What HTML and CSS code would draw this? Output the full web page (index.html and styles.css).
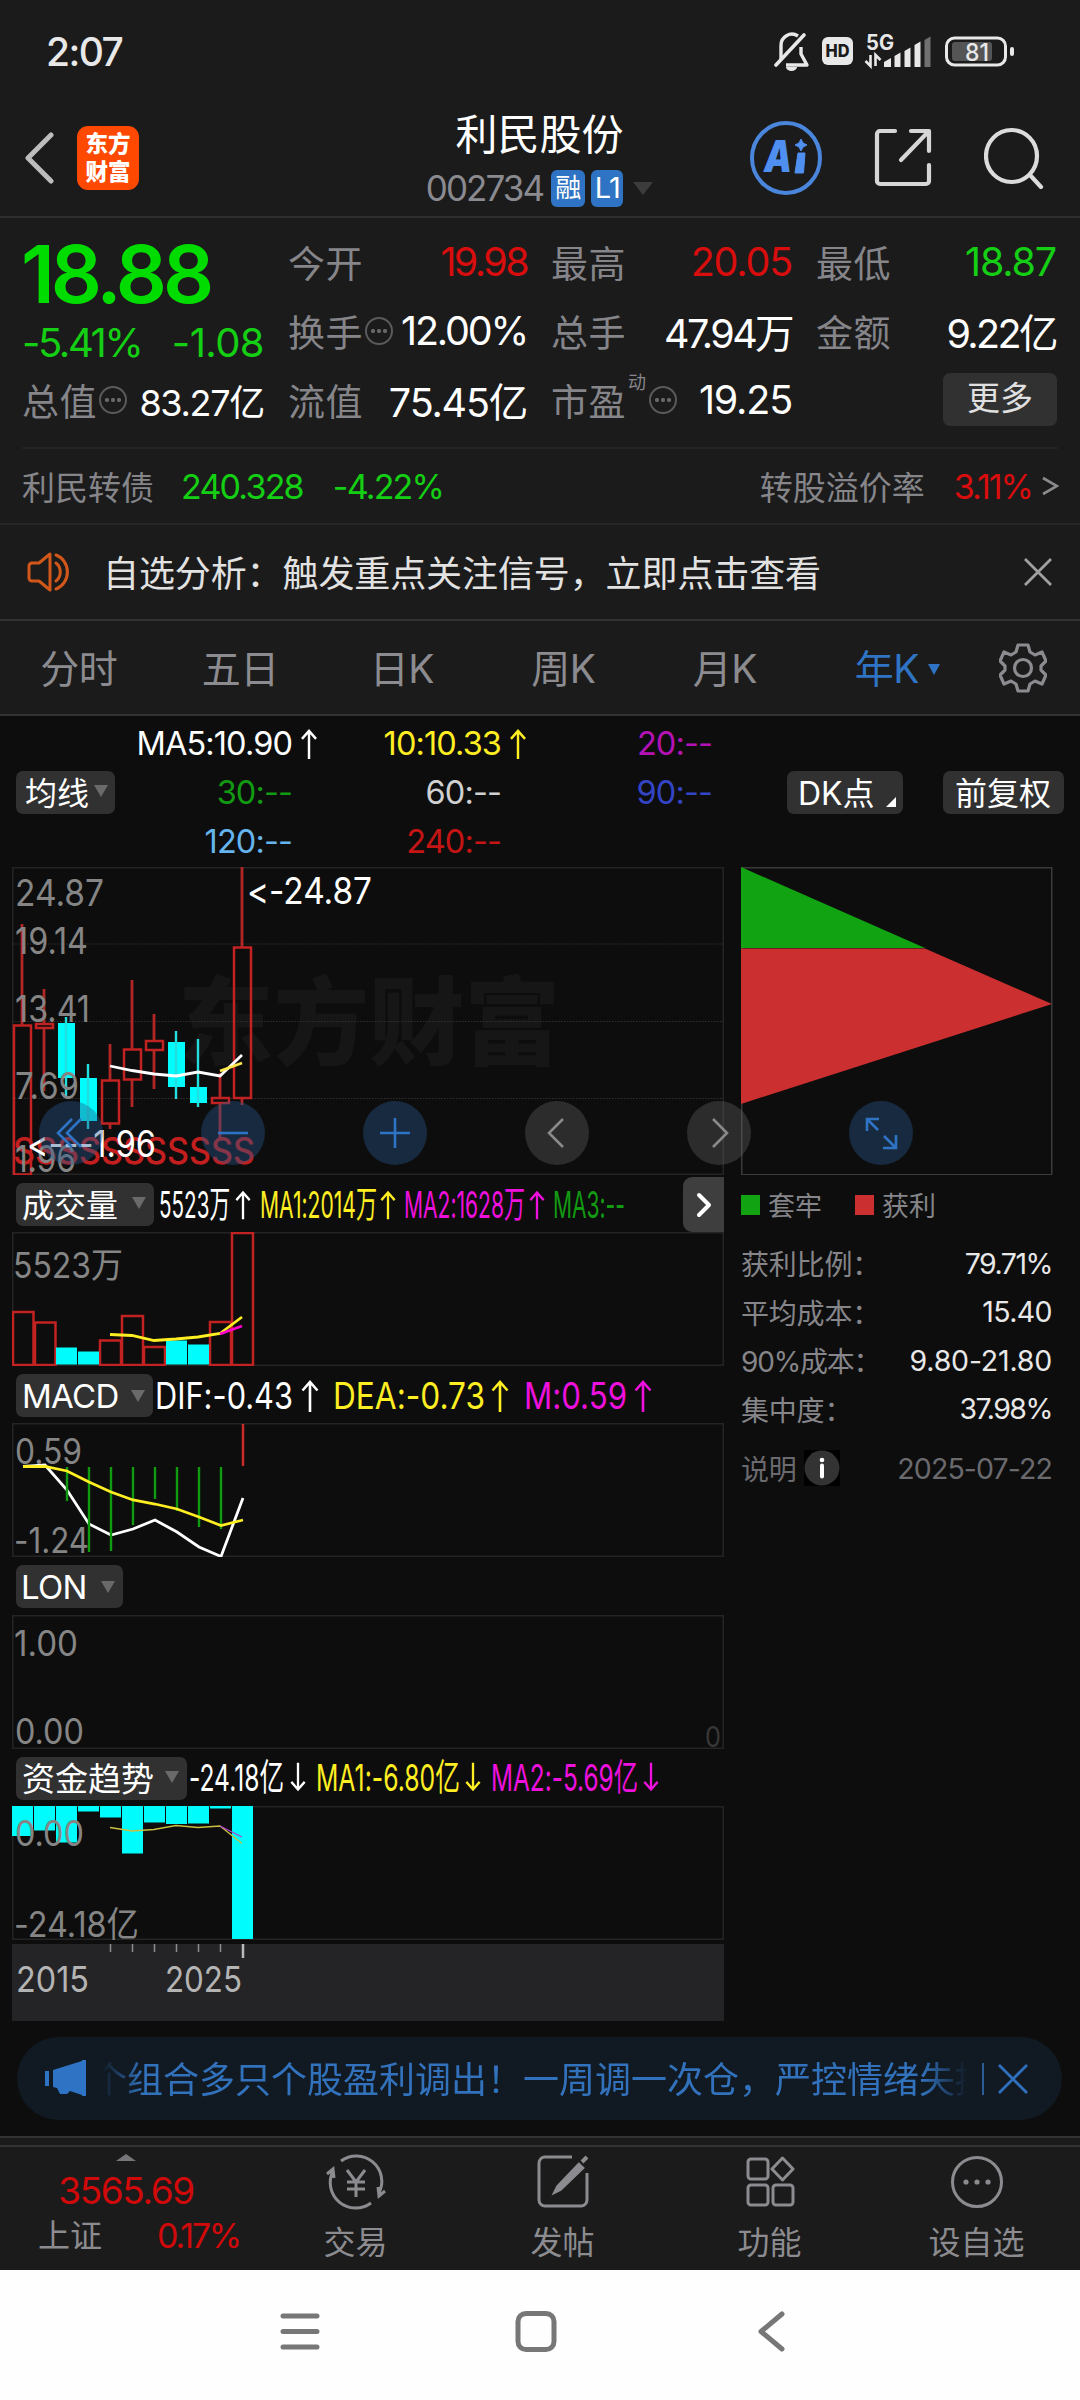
FILE: index.html
```html
<!DOCTYPE html>
<html lang="zh-CN">
<head>
    <meta charset="UTF-8">
    <meta name="viewport" content="width=device-width, initial-scale=1.0">
    <title>利民股份 002734</title>
    <link rel="stylesheet" href="styles.css">
</head>
<body>
    <div class="status-bar">
        <span class="time">2:07</span>
        <svg class="status-icons" width="242" height="42" viewBox="0 0 242 42">
            <!-- muted bell -->
            <path d="M7 30V16a11 11 0 0 1 17-10M27 17v7l6 11H12" fill="none" stroke="#e8e8e8" stroke-width="3.4" stroke-linejoin="round"/>
            <path d="M2 35L30 5" stroke="#e8e8e8" stroke-width="3.6" stroke-linecap="round"/>
            <path d="M12 37h11a5.5 4 0 0 1-11 0z" fill="#e8e8e8"/>
            <rect x="48" y="7" width="31" height="28" rx="6" fill="#e8e8e8"/>
            <text x="51.5" y="27" class="hd" textLength="24" lengthAdjust="spacingAndGlyphs">HD</text>
            <text x="92" y="19.500" class="net" textLength="28" lengthAdjust="spacingAndGlyphs">5G</text>
            <path d="M96.500 25v11l-5-5M101.500 36V25l5 5" fill="none" stroke="#e8e8e8" stroke-width="2.600"/>
            <path d="M110 37v-5l7-4v9zM120.500 37V26l6-3.500V37zM130.500 37V21l6-3.500V37zM140.500 37V15l6-3.500V37z" fill="#e8e8e8"/>
            <path d="M150.500 37V10l6-3.500V37z" fill="#707070"/>
            <rect x="172.500" y="8" width="59" height="27" rx="8" fill="none" stroke="#e8e8e8" stroke-width="3"/>
            <rect x="178" y="12" width="40" height="19" rx="3" fill="#555"/>
            <rect x="236" y="17" width="4" height="9" rx="2" fill="#e8e8e8"/>
            <text x="191" y="30.500" class="bat" textLength="24" lengthAdjust="spacingAndGlyphs">81</text>
        </svg>
    </div>

    <header class="header">
        <div class="header-left">
            <svg width="30" height="52" viewBox="0 0 30 52"><path d="M27 3L4 26l23 23" fill="none" stroke="#bdbdbd" stroke-width="5" stroke-linecap="round" stroke-linejoin="round"/></svg>
            <div class="logo"><span>东方</span><span>财富</span></div>
        </div>
        <div class="title">
            <h1>利民股份</h1>
            <div class="subtitle">
                <span class="code">002734</span>
                <span class="badge">融</span>
                <span class="badge badge-l1">L1</span>
                <svg width="20" height="13" viewBox="0 0 20 13"><path d="M0 0h20L10 13z" fill="#3c3c3c"/></svg>
            </div>
        </div>
        <div class="header-right">
            <svg width="72" height="74" viewBox="0 0 72 74">
                <ellipse cx="36" cy="37" rx="34" ry="35" fill="none" stroke="#4a86dc" stroke-width="4"/>
                <text x="14" y="51" class="ai" textLength="28" lengthAdjust="spacingAndGlyphs">A</text>
                <path d="M48 32h7l-1.500 20h-8.500z" fill="#4f8ff0" stroke="#4f8ff0" stroke-linejoin="round"/>
                <path d="M51 18l2 4 4 2-4 2-2 4-2-4-4-2 4-2z" fill="#4f8ff0" stroke="#4f8ff0" stroke-linejoin="round"/>
            </svg>
            <svg width="58" height="60" viewBox="0 0 58 60">
                <path d="M21 3H6a3 3 0 0 0-3 3v47a3 3 0 0 0 3 3h46a3 3 0 0 0 3-3V37" fill="none" stroke="#d6d6d6" stroke-width="4.200" stroke-linecap="round"/>
                <path d="M37 3h18v20M54 4L27 32" fill="none" stroke="#d6d6d6" stroke-width="4.200" stroke-linecap="round" stroke-linejoin="round"/>
            </svg>
            <svg width="60" height="62" viewBox="0 0 60 62">
                <ellipse cx="27.500" cy="29" rx="25.500" ry="26" fill="none" stroke="#dcdcdc" stroke-width="4.200"/>
                <path d="M46 48l11 12" stroke="#dcdcdc" stroke-width="4.200" stroke-linecap="round"/>
            </svg>
        </div>
    </header>

    <section class="quote">
        <div class="quote-main">
            <div class="price-box">
                <div class="price">18.88</div>
                <div class="change"><span class="s-pct">-5.41%</span><span>-1.08</span></div>
            </div>
            <div class="cell c1"><label>总值<i class="more-dot"></i></label><b class="small">83.27亿</b></div>
            <div class="cell c2"><label>今开</label><b class="red tight">19.98</b></div>
            <div class="cell c2"><label>换手<i class="more-dot"></i></label><b class="s-pct">12.00%</b></div>
            <div class="cell c2"><label>流值</label><b>75.45亿</b></div>
            <div class="cell c3"><label>最高</label><b class="red">20.05</b></div>
            <div class="cell c3"><label>总手</label><b class="tight">47.94万</b></div>
            <div class="cell c3"><label>市盈<sup>动</sup><i class="more-dot"></i></label><b>19.25</b></div>
            <div class="cell c4"><label>最低</label><b class="green">18.87</b></div>
            <div class="cell c4"><label>金额</label><b class="tight">9.22亿</b></div>
            <div class="cell c4 end"><span class="btn-more">更多</span></div>
        </div>
        <div class="bond">
            <span class="bond-name">利民转债</span>
            <span class="green bond-price">240.328</span>
            <span class="green">-4.22%</span>
            <span class="premium">转股溢价率</span>
            <span class="red tight">3.11%</span>
            <svg width="17" height="20" viewBox="0 0 17 20"><path d="M1 2l14 8-14 8" fill="none" stroke="#8a8a8e" stroke-width="2.600"/></svg>
        </div>
    </section>

    <div class="notice">
        <svg width="48" height="42" viewBox="0 0 48 42" fill="none" stroke="#d2571a" stroke-width="3">
            <path d="M22 3L11 12H4a3 3 0 0 0-3 3v12a3 3 0 0 0 3 3h7l11 9z" stroke-linejoin="round" transform="translate(1)"/>
            <path d="M29 12a10 11 0 0 1 0 18M29 4a17 18 0 0 1 0 34" stroke-linecap="round"/>
        </svg>
        <span>自选分析：触发重点关注信号，立即点击查看</span>
        <svg width="28" height="28" viewBox="0 0 28 28"><path d="M1 1l26 26M27 1L1 27" stroke="#a0a0a0" stroke-width="2.800"/></svg>
    </div>

    <nav class="tabs">
        <span>分时</span>
        <span>五日</span>
        <span>日K</span>
        <span>周K</span>
        <span>月K</span>
        <span class="active">年K<i></i></span>
        <svg width="48" height="50" viewBox="0 0 48 50" fill="none" stroke="#8c8c90" stroke-width="3.200" stroke-linejoin="round">
            <path d="M19 2h10l2 7 5 3 7-3 4 9-5 5v4l5 5-4 9-7-3-5 3-2 7H19l-2-7-5-3-7 3-4-9 5-5v-4l-5-5 4-9 7 3 5-3z"/>
            <circle cx="24" cy="25" r="8.500"/>
        </svg>
    </nav>

    <main class="chart-area">
        <svg class="defs" width="0" height="0">
            <symbol id="up" viewBox="0 0 18 32"><path d="M9 32V2M1.500 10.500L9 2l7.500 8.500" fill="none" stroke="currentColor" stroke-width="2.600"/></symbol>
            <symbol id="down" viewBox="0 0 18 32"><path d="M9 0v30M1.500 21.500L9 30l7.500-8.500" fill="none" stroke="currentColor" stroke-width="2.600"/></symbol>
        </svg>

        <div class="ma-bar">
            <span class="pill pill-ma">均线<i class="caret"></i></span>
            <div class="ma-grid">
                <span class="white">MA5:10.90<svg><use href="#up"/></svg></span>
                <span class="yellow">10:10.33<svg><use href="#up"/></svg></span>
                <span class="purple">20:--<svg></svg></span>
                <span class="dgreen">30:--<svg></svg></span>
                <span class="gray">60:--<svg></svg></span>
                <span class="blue">90:--<svg></svg></span>
                <span class="sky">120:--<svg></svg></span>
                <span class="dred">240:--<svg></svg></span>
            </div>
            <span class="pill pill-dk">DK点<i class="corner"></i></span>
            <span class="pill pill-fq">前复权</span>
        </div>

        <div class="charts">
            <div class="left">
                <!-- K line -->
                <svg class="kline" width="712" height="308" viewBox="0 0 712 308">
                    <text x="166" y="190" class="watermark" textLength="382" lengthAdjust="spacingAndGlyphs">东方财富</text>
                    <rect x=".75" y=".75" width="710.500" height="306.500" class="frame"/>
                    <path d="M0 77h712M0 154.500h712M0 231.500h712" class="dots"/>
                    <g class="up">
                        <rect x="2" y="158.500" width="17" height="149"/><path d="M10 57v101"/>
                        <rect x="24" y="157" width="17" height="4"/><path d="M32 122v35M32 161v63"/>
                        <rect x="90" y="213.500" width="17" height="43"/><path d="M98 177v36M98 257v5"/>
                        <rect x="112" y="182.500" width="17" height="30"/><path d="M120 113v69M120 213v27"/>
                        <rect x="134" y="174" width="17" height="9"/><path d="M142 147v27M142 183v39"/>
                        <rect x="200" y="231" width="17" height="5"/><path d="M208 206v25M208 236v37"/>
                        <rect x="222" y="80.500" width="17" height="150.500"/><path d="M230 0v80M230 232v6"/>
                    </g>
                    <g class="fall">
                        <rect x="46" y="156" width="17" height="55"/><path d="M54 150v81"/>
                        <rect x="68" y="211" width="17" height="43"/><path d="M76 197v65"/>
                        <rect x="156" y="175" width="17" height="45"/><path d="M164 164v68"/>
                        <rect x="178" y="220" width="17" height="16"/><path d="M186 172v68"/>
                    </g>
                    <polyline points="98,199 120,203.500 142,207 164,209 186,205 208,209 230,188" class="line" stroke="#fff"/>
                    <polyline points="208,204 230,196" class="line" stroke="#ffe94d"/>
                    <text x="1" y="297" class="sell" textLength="242" lengthAdjust="spacingAndGlyphs">SSSSSSSSSSS</text>
                    <g class="axis">
                        <text x="3" y="39" textLength="89" lengthAdjust="spacingAndGlyphs">24.87</text>
                        <text x="3" y="87" textLength="73" lengthAdjust="spacingAndGlyphs">19.14</text>
                        <text x="3" y="155" textLength="75" lengthAdjust="spacingAndGlyphs">13.41</text>
                        <text x="3" y="231.500" textLength="64" lengthAdjust="spacingAndGlyphs">7.69</text>
                        <text x="3" y="304.500" textLength="61" lengthAdjust="spacingAndGlyphs">1.96</text>
                    </g>
                    <g class="mark">
                        <text x="235" y="37" textLength="125" lengthAdjust="spacingAndGlyphs">&lt;-24.87</text>
                        <text x="15" y="289.500" textLength="129" lengthAdjust="spacingAndGlyphs">&lt;---1.96</text>
                    </g>
                </svg>

                <!-- volume -->
                <div class="ind-head">
                    <span class="pill pill-vol">成交量<i class="caret"></i></span>
                    <svg width="712" height="57" viewBox="0 0 712 57" class="ind-values">
                        <g class="white"><text x="147" y="43" textLength="71" lengthAdjust="spacingAndGlyphs">5523万</text><use href="#up" x="223" y="12" width="16" height="36"/></g>
                        <g class="yellow"><text x="248" y="43" textLength="117" lengthAdjust="spacingAndGlyphs">MA1:2014万</text><use href="#up" x="368" y="12" width="16" height="36"/></g>
                        <g class="magenta"><text x="392" y="43" textLength="121" lengthAdjust="spacingAndGlyphs">MA2:1628万</text><use href="#up" x="517" y="12" width="16" height="36"/></g>
                        <g class="dgreen"><text x="541" y="43" textLength="72" lengthAdjust="spacingAndGlyphs">MA3:--</text></g>
                    </svg>
                    <span class="next"><svg width="16" height="26" viewBox="0 0 16 26"><path d="M3 3l10 10L3 23" fill="none" stroke="#fff" stroke-width="4" stroke-linecap="round" stroke-linejoin="round"/></svg></span>
                </div>
                <svg width="712" height="134" viewBox="0 0 712 134">
                    <rect x=".75" y=".75" width="710.500" height="132.500" class="frame"/>
                    <g class="up">
                        <rect x="1" y="80" width="20.500" height="53"/>
                        <rect x="23" y="90.500" width="20.500" height="42.500"/>
                        <rect x="88" y="108.500" width="21" height="24.500"/>
                        <rect x="110" y="84" width="21" height="49"/>
                        <rect x="132" y="115" width="21" height="18"/>
                        <rect x="198" y="90" width="21" height="43"/>
                        <rect x="220" y="1" width="21" height="132"/>
                    </g>
                    <g class="fall">
                        <rect x="44" y="115.500" width="21" height="17"/>
                        <rect x="66" y="119.500" width="21" height="13"/>
                        <rect x="154" y="108.500" width="21" height="24"/>
                        <rect x="176" y="112.500" width="21" height="20"/>
                    </g>
                    <polyline points="98,102.500 120,103.500 142,108.500 164,107 186,105 208,101.500 230,85" class="line" stroke="#ffee22"/>
                    <polyline points="208,102 230,94" class="line" stroke="#f0c"/>
                    <text x="1" y="46" class="axis" textLength="110" lengthAdjust="spacingAndGlyphs">5523万</text>
                </svg>

                <!-- MACD -->
                <div class="ind-head">
                    <span class="pill pill-macd">MACD<i class="caret"></i></span>
                    <svg width="712" height="57" viewBox="0 0 712 57" class="ind-values">
                        <g class="white"><text x="143" y="43" textLength="138" lengthAdjust="spacingAndGlyphs">DIF:-0.43</text><use href="#up" x="289" y="14" width="18" height="32"/></g>
                        <g class="yellow"><text x="321" y="43" textLength="152" lengthAdjust="spacingAndGlyphs">DEA:-0.73</text><use href="#up" x="479" y="14" width="18" height="32"/></g>
                        <g class="magenta"><text x="512" y="43" textLength="103" lengthAdjust="spacingAndGlyphs">M:0.59</text><use href="#up" x="622" y="14" width="18" height="32"/></g>
                    </svg>
                </div>
                <svg width="712" height="134" viewBox="0 0 712 134">
                    <rect x=".75" y=".75" width="710.500" height="132.500" class="frame"/>
                    <polyline points="11,43.500 33,42 55,67 77,101 99,112 121,106 143,97 165,109 187,124 209,133.500 231,75" class="line" stroke="#fff"/>
                    <path d="M55 44v34M77 44v85M99 44v84M121 44v58M143 44v32M165 44v44M187 44v60M209 44v62" stroke="#109a10" stroke-width="2.400"/>
                    <path d="M231 1v42" stroke="#c92a2a" stroke-width="2.500"/>
                    <polyline points="11,43.500 33,43.500 55,48 77,59 99,69 121,77 143,81 165,86 187,94 209,102.500 231,97" class="line" stroke="#ffee22"/>
                    <g class="axis">
                        <text x="3" y="41" textLength="67" lengthAdjust="spacingAndGlyphs">0.59</text>
                        <text x="2" y="130" textLength="75" lengthAdjust="spacingAndGlyphs">-1.24</text>
                    </g>
                </svg>

                <!-- LON -->
                <div class="ind-head lon-head">
                    <span class="pill pill-lon">LON<i class="caret"></i></span>
                </div>
                <svg width="712" height="134" viewBox="0 0 712 134">
                    <rect x=".75" y=".75" width="710.500" height="132.500" class="frame"/>
                    <g class="axis">
                        <text x="2" y="40.500" textLength="64" lengthAdjust="spacingAndGlyphs">1.00</text>
                        <text x="3" y="129" textLength="69" lengthAdjust="spacingAndGlyphs">0.00</text>
                    </g>
                    <text x="693" y="132" class="zero" textLength="16" lengthAdjust="spacingAndGlyphs">0</text>
                </svg>

                <!-- capital flow -->
                <div class="ind-head">
                    <span class="pill pill-fund">资金趋势<i class="caret"></i></span>
                    <svg width="712" height="57" viewBox="0 0 712 57" class="ind-values">
                        <g class="white"><text x="177" y="42" textLength="95" lengthAdjust="spacingAndGlyphs">-24.18亿</text><use href="#down" x="278" y="10" width="16" height="36"/></g>
                        <g class="yellow"><text x="304" y="42" textLength="144" lengthAdjust="spacingAndGlyphs">MA1:-6.80亿</text><use href="#down" x="453" y="10" width="16" height="36"/></g>
                        <g class="magenta"><text x="479" y="42" textLength="147" lengthAdjust="spacingAndGlyphs">MA2:-5.69亿</text><use href="#down" x="631" y="10" width="16" height="36"/></g>
                    </svg>
                </div>
                <svg width="712" height="134" viewBox="0 0 712 134">
                    <rect x=".75" y=".75" width="710.500" height="132.500" class="frame"/>
                    <g class="fall">
                        <rect x="0" width="21" height="30"/>
                        <rect x="22" width="21" height="24.500"/>
                        <rect x="44" width="21" height="36.500"/>
                        <rect x="66" width="21" height="5.500"/>
                        <rect x="88" width="21" height="11.500"/>
                        <rect x="110" width="21" height="47.500"/>
                        <rect x="132" width="21" height="16.500"/>
                        <rect x="154" width="21" height="18"/>
                        <rect x="176" width="21" height="17.500"/>
                        <rect x="198" width="21" height="2.500"/>
                        <rect x="220" width="21" height="133"/>
                    </g>
                    <polyline points="98,21.500 120,25 142,23.500 164,19.500 186,21.500 208,20 230,37.500" class="thin" stroke="#c8c040"/>
                    <polyline points="208,20 230,31" class="thin" stroke="#b040d0"/>
                    <g class="axis">
                        <text x="3" y="39.500" textLength="69" lengthAdjust="spacingAndGlyphs">0.00</text>
                        <text x="2" y="130.500" textLength="125" lengthAdjust="spacingAndGlyphs">-24.18亿</text>
                    </g>
                </svg>

                <svg class="time-axis" width="712" height="77" viewBox="0 0 712 77">
                    <path d="M98.500 0v8M120.500 0v8M142.500 0v8M164.500 0v8M186.500 0v8M208.500 0v8" stroke="#8c8c8c" stroke-width="1.500"/>
                    <path d="M231 0v14" stroke="#bbb" stroke-width="2.500"/>
                    <text x="4" y="48" textLength="73" lengthAdjust="spacingAndGlyphs">2015</text>
                    <text x="153" y="48" textLength="77" lengthAdjust="spacingAndGlyphs">2025</text>
                </svg>
            </div>

            <!-- chip distribution -->
            <aside class="chips">
                <svg width="312" height="308" viewBox="0 0 312 308">
                    <rect x=".75" y=".75" width="310" height="307" fill="none" stroke="#3a3a3a" stroke-width="1.500"/>
                    <path d="M0 0L184 81H0z" fill="#12a312"/>
                    <path d="M0 81.500h184L311 137 0 237z" fill="#cb2f2f"/>
                </svg>
                <div class="legend">
                    <i class="sq-green"></i><span>套牢</span>
                    <i class="sq-red"></i><span>获利</span>
                </div>
                <dl>
                    <div><dt>获利比例：</dt><dd class="tight">79.71%</dd></div>
                    <div><dt>平均成本：</dt><dd>15.40</dd></div>
                    <div><dt class="pct">90%成本：</dt><dd class="range">9.80-21.80</dd></div>
                    <div><dt>集中度：</dt><dd class="tight">37.98%</dd></div>
                    <div class="explain"><dt>说明<svg width="36" height="36" viewBox="0 0 36 36"><rect width="36" height="36" fill="#000"/><circle cx="18" cy="18" r="17.500" fill="#333"/><circle cx="18" cy="10" r="2.300" fill="#fff"/><path d="M18 15.500v11" stroke="#fff" stroke-width="4" stroke-linecap="round"/></svg></dt><dd>2025-07-22</dd></div>
                </dl>
            </aside>

            <div class="controls">
                <span class="ctl"><svg viewBox="0 0 64 64"><path d="M33 18L19 32l14 14M42 18L28 32l14 14"/></svg></span>
                <span class="ctl"><svg viewBox="0 0 64 64"><path d="M17 32h30"/></svg></span>
                <span class="ctl"><svg viewBox="0 0 64 64"><path d="M17 32h30M32 17v30"/></svg></span>
                <span class="ctl plain"><svg viewBox="0 0 64 64"><path d="M38 18L24 32l14 14"/></svg></span>
                <span class="ctl plain"><svg viewBox="0 0 64 64"><path d="M26 18l14 14-14 14"/></svg></span>
                <span class="ctl"><svg viewBox="0 0 64 64"><path d="M18 30V18h12M18 18l11 11M47 34v13H34M47 47L35 35"/></svg></span>
            </div>
        </div>

        <div class="promo">
            <svg width="43" height="37" viewBox="0 0 43 37" fill="#2f74c4"><path d="M1 11h4v15H1zM9 10L38 1v34L26 31l-3 3h-7l-3-6-4-1z"/><path d="M38 0h4v36h-4z"/></svg>
            <div class="promo-text">个组合多只个股盈利调出！一周调一次仓，严控情绪失控</div>
            <i class="promo-sep"></i>
            <svg width="30" height="30" viewBox="0 0 30 30"><path d="M1 1l28 28M29 1L1 29" stroke="#2f6fbb" stroke-width="2.800"/></svg>
        </div>
    </main>

    <footer class="toolbar">
        <div class="index">
            <svg width="20" height="7" viewBox="0 0 20 7"><path d="M0 7L10 0l10 7z" fill="#77777b"/></svg>
            <b>3565.69</b>
            <div><span>上证</span><em>0.17%</em></div>
        </div>
        <div class="tool">
            <svg width="60" height="56" viewBox="0 0 60 56" fill="none" stroke="#8c8c90" stroke-width="3">
                <path d="M15 7a25.500 25.500 0 0 1 38 32M45 49A25.500 25.500 0 0 1 7 17M1 20l6-5 1 9M59 37l-6 5-1-9"/>
                <path d="M21 16l9 12 9-12M30 28v15M21 28h18M21 35h18"/>
            </svg>
            <span>交易</span>
        </div>
        <div class="tool">
            <svg width="52" height="56" viewBox="0 0 52 56" fill="none" stroke="#8c8c90" stroke-width="3">
                <path d="M35 3H8a6 6 0 0 0-6 6v37a6 6 0 0 0 6 6h36a6 6 0 0 0 6-6V19"/>
                <path d="M42 11L21 33l-2 4 4-2 22-21zM45 8l5-5" stroke-width="4"/>
            </svg>
            <span>发帖</span>
        </div>
        <div class="tool">
            <svg width="50" height="56" viewBox="0 0 50 56" fill="none" stroke="#8c8c90" stroke-width="3">
                <rect x="3" y="5" width="20" height="20" rx="3"/>
                <rect x="3" y="31" width="20" height="20" rx="3"/>
                <rect x="28" y="31" width="20" height="20" rx="3"/>
                <path d="M37.500 4L48 15 37.500 26 27 15z" stroke-linejoin="round"/>
            </svg>
            <span>功能</span>
        </div>
        <div class="tool">
            <svg width="54" height="56" viewBox="0 0 54 56">
                <circle cx="27" cy="28" r="24.500" fill="none" stroke="#8c8c90" stroke-width="3"/>
                <g fill="#8c8c90"><circle cx="16" cy="28" r="2.600"/><circle cx="27" cy="28" r="2.600"/><circle cx="38" cy="28" r="2.600"/></g>
            </svg>
            <span>设自选</span>
        </div>
    </footer>

    <div class="sys-nav">
        <svg width="40" height="44" viewBox="0 0 40 44"><path d="M3 6h34M3 21.500h34M3 37h34" stroke="#777" stroke-width="5" stroke-linecap="round"/></svg>
        <svg width="42" height="44" viewBox="0 0 42 44"><rect x="3" y="3.500" width="36" height="36" rx="8" fill="none" stroke="#777" stroke-width="5"/></svg>
        <svg width="40" height="44" viewBox="0 0 40 44"><path d="M31 4L10 21.500 31 39" fill="none" stroke="#777" stroke-width="5" stroke-linecap="round" stroke-linejoin="round"/></svg>
    </div>
</body>
</html>
```
FILE: styles.css
```css
* { box-sizing: border-box; }
body {
    margin: 0;
    width: 1080px;
    background: #1b1b1b;
    color: #fff;
    font-family: Inter, "Noto Sans CJK SC", sans-serif;
    font-weight: 400;
    font-feature-settings: "calt" 0;
    white-space: nowrap;
}
svg { display: block; flex: none; }
i, em { font-style: normal; }
b { font-weight: 400; }

.red { color: #d80d0d; }
.green { color: #14cf14; }
.white { color: #fff; fill: #fff; }
.yellow { color: #ffee22; fill: #ffee22; }
.magenta { color: #ee11dd; fill: #ee11dd; }
.purple { color: #b412b4; }
.dgreen { color: #129a12; fill: #129a12; }
.gray { color: #d0d0d0; }
.blue { color: #3344c4; }
.sky { color: #66b4ee; }
.dred { color: #c41414; }

/* status bar */
.status-bar {
    height: 102px;
    padding: 0 64px 0 46px;
    display: flex;
    align-items: center;
    justify-content: space-between;
}
.time {
    font-size: 39px;
    font-weight: 500;
    color: #e8e8e8;
    letter-spacing: -1.6px;
}
.hd { font-size: 17px; font-weight: 800; fill: #1b1b1b; }
.net { font-size: 21px; font-weight: 700; fill: #e8e8e8; }
.bat { font-size: 24px; font-weight: 500; fill: #e8e8e8; }

/* header */
.header {
    height: 116px;
    padding: 0 36px 10px 24px;
    border-bottom: 2px solid #2e2e2e;
    display: grid;
    grid-template-columns: 346px 1fr 294px;
    align-items: center;
}
.header-left { display: flex; align-items: center; gap: 23px; }
.logo {
    width: 62px;
    height: 64px;
    border-radius: 11px;
    background: #ff4800;
    display: flex;
    flex-direction: column;
    align-items: center;
    justify-content: center;
    font-size: 22.5px;
    font-weight: 900;
    line-height: 28px;
}
.title {
    display: flex;
    flex-direction: column;
    align-items: center;
    padding-right: 41px;
}
.title h1 {
    margin: 6px 0 0;
    font-size: 42px;
    font-weight: 400;
    line-height: 54px;
}
.subtitle { display: flex; align-items: center; height: 52px; }
.code { font-size: 35px; color: #8a8a90; letter-spacing: -1.9px; margin-right: 8px; }
.badge {
    width: 34px;
    height: 37px;
    border-radius: 6px;
    background: #2f74c4;
    font-size: 26px;
    line-height: 36px;
    text-align: center;
    margin-right: 6px;
}
.badge-l1 { width: 32px; font-size: 29px; letter-spacing: -1px; margin-right: 10px; }
.header-right { display: flex; align-items: center; justify-content: space-between; }
.ai { font-size: 44px; font-weight: 900; font-style: italic; fill: #4f8ff0; }

/* quote */
.quote { height: 307px; border-bottom: 2px solid #262626; }
.quote-main {
    height: 231px;
    margin: 0 22px;
    padding: 9px 1px 0 0;
    border-bottom: 2px solid #232323;
    display: grid;
    grid-auto-flow: column;
    grid-template-rows: 69px 69px 69px;
    grid-template-columns: 242px 239px 241px 240px;
    column-gap: 24px;
}
.price-box { grid-row: span 2; }
.price {
    height: 94px;
    margin-left: -1px;
    font-size: 80px;
    font-weight: 600;
    line-height: 94px;
    color: #00dc00;
    letter-spacing: -4px;
}
.change {
    display: flex;
    justify-content: space-between;
    color: #14cf14;
    font-size: 40px;
    line-height: 44px;
    letter-spacing: -0.6px;
}
.cell { display: flex; align-items: center; justify-content: space-between; }
.cell label { display: flex; align-items: center; font-size: 37px; color: #85858a; letter-spacing: 0.5px; }
.cell label sup { align-self: flex-start; font-size: 18px; line-height: 18px; margin: 1px 0 0 2px; }
.cell b { font-size: 39.5px; letter-spacing: -1.2px; }
.cell b.small { font-size: 36px; letter-spacing: -1.3px; }
.cell b.tight { letter-spacing: -2.6px; }
.cell b.s-pct { letter-spacing: -2.2px; }
.change .s-pct { letter-spacing: -2.4px; }
.cell.end { justify-content: flex-end; }
.more-dot {
    width: 28px;
    height: 28px;
    margin-left: 2px;
    border: 2px solid #5a5a5a;
    border-radius: 50%;
    background:
        radial-gradient(circle at 6px 12px, #666 1.8px, transparent 2.4px),
        radial-gradient(circle at 12px 12px, #666 1.8px, transparent 2.4px),
        radial-gradient(circle at 18px 12px, #666 1.8px, transparent 2.4px);
}
.btn-more {
    width: 114px;
    height: 53px;
    margin-right: -1px;
    border-radius: 7px;
    background: #313131;
    color: #e0e0e0;
    font-size: 33px;
    line-height: 51px;
    text-align: center;
}
.bond {
    height: 74px;
    padding: 0 21px 0 22px;
    display: flex;
    align-items: center;
    font-size: 34px;
    letter-spacing: -1.8px;
}
.bond-name, .premium { font-size: 33px; color: #85858a; letter-spacing: 0; }
.bond-price { margin: 0 30px 0 27px; }
.premium { margin-left: auto; margin-right: 29px; }
.bond .tight { letter-spacing: -2px; margin-right: 10px; }

/* notice */
.notice {
    height: 96px;
    padding: 0 28px 0 27px;
    border-bottom: 2px solid #333;
    display: flex;
    align-items: center;
    color: #e2e2e2;
    font-size: 36px;
    letter-spacing: -0.1px;
}
.notice span { margin: 0 auto 0 28px; padding-bottom: 3px; }

/* period tabs */
.tabs {
    height: 95px;
    border-bottom: 2px solid #333;
    display: flex;
    align-items: center;
    font-size: 39px;
    color: #8c8c90;
}
.tabs span { width: 161.5px; padding: 0 4px 3px 0; text-align: center; letter-spacing: -0.5px; }
.tabs svg { margin-left: 30px; }
.tabs .active { color: #2f74c4; }
.tabs .active i {
    display: inline-block;
    margin: 0 -22px 8px 9px;
    border: 6.5px solid transparent;
    border-top: 11px solid #2f74c4;
    border-bottom: 0;
}

/* chart area */
.chart-area { height: 1420px; background: #0d0d0d; }
.defs { position: absolute; }
.pill {
    height: 43px;
    padding: 0 0 3px 6px;
    border-radius: 7px;
    background: #313131;
    display: flex;
    align-items: center;
    flex: none;
    font-size: 32px;
}
.caret {
    border: 7px solid transparent;
    border-top: 12px solid #6a6a6a;
    border-bottom: 0;
    margin: 0 8px 0 auto;
}
.ma-bar {
    height: 151px;
    padding: 2px 16px 0;
    display: flex;
    align-items: center;
}
.pill-ma { width: 99px; padding-left: 9px; }
.pill-ma .caret { margin-right: 7px; }
.ma-grid {
    width: 672px;
    height: 147px;
    padding-right: 48px;
    display: grid;
    grid-template-columns: 203px 209px 211px;
    grid-auto-rows: 49px;
    align-items: center;
    font-size: 32.5px;
    letter-spacing: -0.9px;
}
.ma-grid span { display: flex; align-items: center; justify-content: flex-end; }
.ma-grid svg { width: 18px; height: 30px; margin-left: 8px; }
.pill-dk { width: 116px; padding-left: 11px; justify-content: space-between; letter-spacing: 0; }
.corner {
    align-self: flex-end;
    margin: 0 7px 4px 0;
    border-left: 10px solid transparent;
    border-bottom: 10px solid #fff;
}
.pill-fq { width: 121px; margin-left: auto; padding-left: 12px; }

.charts { position: relative; display: flex; gap: 17px; padding-left: 12px; }
.left { width: 712px; }
.frame { fill: none; stroke: #242424; stroke-width: 1.5; }
.dots { stroke: #303030; stroke-width: 1.2; stroke-dasharray: 1.5 1.5; }
.watermark { font-size: 96px; font-weight: 900; fill: #161616; }
.up rect { fill: none; stroke: #c32222; stroke-width: 2.5; }
.up path { stroke: #b22626; stroke-width: 2.8; }
.fall rect { fill: #00fcfc; }
.fall path { stroke: #22dede; stroke-width: 2.4; }
.line { fill: none; stroke-width: 2.8; }
.thin { fill: none; stroke-width: 1.3; }
.axis { font-size: 35px; fill: #858585; }
.kline .axis, .mark, .sell { font-size: 37px; }
.mark { fill: #fff; }
.sell { fill: #c41f1f; font-weight: 500; }
.zero { font-size: 28px; fill: #383838; }
.ind-head { position: relative; height: 57px; padding: 8px 0 0 4px; display: flex; }
.lon-head { height: 58px; }
.ind-values { position: absolute; left: 0; top: 0; font-size: 37px; }
.pill-vol { width: 138px; }
.pill-macd { width: 137px; }
.pill-lon { width: 107px; padding-left: 5px; }
.pill-macd, .pill-lon { letter-spacing: -0.7px; font-size: 33px; padding-bottom: 0; }
.pill-fund { width: 171px; }
.pill-fund { font-size: 33px; }
.next {
    position: absolute;
    right: 0;
    top: 2px;
    width: 41px;
    height: 55px;
    border-radius: 9px 0 0 9px;
    background: #3e3e3e;
    display: flex;
    align-items: center;
    justify-content: center;
}
.time-axis { margin-top: 4px; background: #242426; font-size: 36px; }
.time-axis text { fill: #b4b4b4; }

.chips { width: 311px; }
.legend {
    height: 60px;
    display: flex;
    align-items: center;
    font-size: 27px;
    color: #85858a;
}
.legend i { width: 19px; height: 20px; margin-right: 8px; }
.legend span { margin-right: 33px; padding-bottom: 2px; }
.sq-green { background: #12a312; }
.sq-red { background: #cb2f2f; }
.chips dl { margin: 4px 0 0; }
.chips dl div { height: 48.5px; display: flex; align-items: center; justify-content: space-between; }
.chips dt { display: flex; align-items: center; font-size: 28px; color: #85858a; letter-spacing: -0.2px; }
.chips dt.pct { letter-spacing: -1.2px; }
.chips dd { margin: 0; font-size: 28.5px; letter-spacing: -0.6px; color: #e8e8e8; }
.chips dd.tight { letter-spacing: -1.5px; }
.chips dd.range { letter-spacing: -0.2px; }
.chips .explain { margin-top: 11px; }
.explain dt { color: #6a6a6e; }
.explain dt svg { margin-left: 7px; }
.chips .explain dd { color: #6a6a6e; letter-spacing: -0.9px; }

.controls { position: absolute; left: 39px; top: 234px; display: flex; gap: 98px; }
.ctl { width: 64px; height: 64px; border-radius: 50%; background: rgba(39, 87, 140, 0.4); }
.ctl path { fill: none; stroke: #2f74c4; stroke-width: 2.6; }
.ctl.plain { background: rgba(110, 110, 110, 0.33); }
.ctl.plain path { stroke: #8a8a8a; }

.promo {
    height: 83px;
    margin: 16px 18px 0 17px;
    padding: 0 34px 0 27px;
    border-radius: 42px;
    background: #111a23;
    display: flex;
    align-items: center;
}
.promo-text {
    width: 866px;
    margin-left: 15px;
    padding-bottom: 3px;
    overflow: hidden;
    text-indent: -11px;
    font-size: 36px;
    letter-spacing: 0;
    color: #3272bd;
    -webkit-mask-image: linear-gradient(90deg, transparent, #000 40px, #000 820px, transparent);
    mask-image: linear-gradient(90deg, transparent, #000 40px, #000 820px, transparent);
}
.promo-sep { width: 2px; height: 32px; margin: 0 14px; background: #2a5c98; }

/* bottom toolbar */
.toolbar {
    height: 134px;
    border-top: 2px solid #333;
    padding-top: 7px;
    display: grid;
    grid-template-columns: 252px repeat(4, 207px);
    color: #8c8c90;
    background: linear-gradient(#333, #333) 0 7px / 100% 2px no-repeat;
}
.index { display: flex; flex-direction: column; align-items: center; padding-top: 9px; }
.index b { margin-top: 6px; font-size: 37px; line-height: 48px; color: #d00a0a; letter-spacing: -1.4px; }
.index div { width: 202px; margin: -4px 0 0 26px; display: flex; justify-content: space-between; align-items: center; line-height: 50px; }
.index div span { font-size: 32px; }
.index em { font-size: 34px; color: #d00a0a; letter-spacing: -2.2px; }
.tool { display: flex; flex-direction: column; align-items: center; padding-top: 9px; font-size: 32px; }
.tool span { margin-top: 11px; line-height: 44px; }

/* system navigation */
.sys-nav {
    height: 130px;
    padding: 0 289px 6px 280px;
    background: #fefefe;
    display: flex;
    align-items: center;
    justify-content: space-between;
}
```
